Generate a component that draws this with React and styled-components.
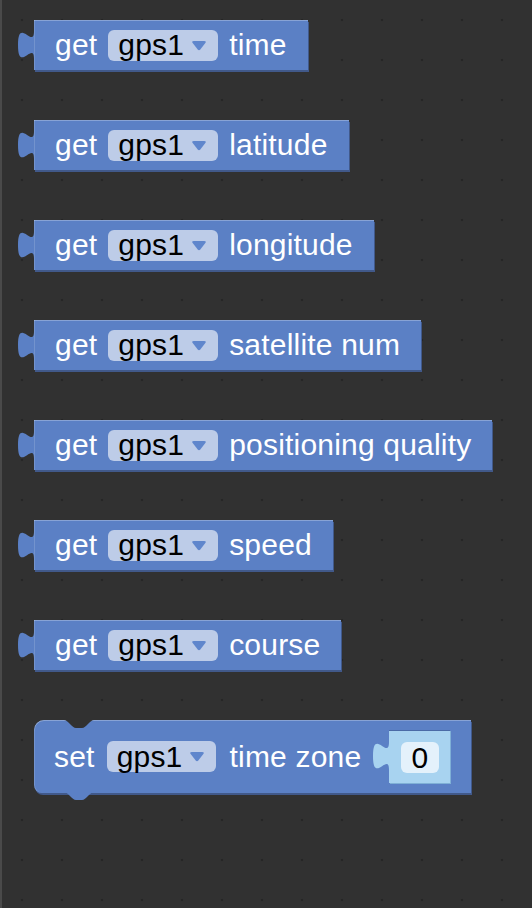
import React from 'react';
import styled, { createGlobalStyle } from 'styled-components';

const BLOCK = '#5b80c5';
const BG = '#313131';

const GlobalStyle = createGlobalStyle`
  html, body {
    margin: 0;
    padding: 0;
    background: ${BG};
  }
`;

const Workspace = styled.div`
  min-height: 908px;
  box-sizing: border-box;
  border-left: 2px solid #4a4a4a;
  background-color: ${BG};
  background-image: radial-gradient(circle, #262626 1px, transparent 1.6px);
  background-size: 40px 40px;
  padding: 20px 0 0 32px;
  display: flex;
  flex-direction: column;
  align-items: flex-start;
  gap: 50px;
  font-family: "Liberation Sans", Arial, sans-serif;
`;

const Block = styled.div`
  position: relative;
  display: flex;
  align-items: center;
  gap: ${p => (p.$tall ? 12 : 11)}px;
  height: ${p => (p.$tall ? 73 : 50)}px;
  box-sizing: border-box;
  padding: 0 21px 0 ${p => (p.$tall ? 20 : 21)}px;
  background: ${BLOCK};
  border-radius: ${p => (p.$tall ? '10px 0 0 8px' : '0')};
  box-shadow:
    inset 0 1px 0 rgba(255, 255, 255, 0.28),
    inset 1px 0 0 rgba(255, 255, 255, 0.15),
    1px 2px 0 #41598a;
`;

const Label = styled.span`
  color: #fff;
  font-size: 30px;
  line-height: 1;
  letter-spacing: 0.2px;
  white-space: nowrap;
  margin-left: ${p => p.$gapLeft || 0}px;
`;

const Dropdown = styled.div`
  display: flex;
  align-items: center;
  gap: 7px;
  height: 31px;
  padding: 0 11px 0 10px;
  box-sizing: border-box;
  border-radius: 6px;
  background: #bdcce8;
  color: #000;
  font-size: 30px;
  line-height: 1;
  letter-spacing: 0.2px;
`;

const Arrow = styled.svg`
  width: 16px;
  height: 10px;
  margin-top: 1px;
`;

const TabSvg = styled.svg`
  position: absolute;
  left: ${p => p.$left}px;
  top: ${p => p.$top}px;
  width: 16px;
  height: ${p => p.$h}px;
  overflow: visible;
`;

const EdgeSvg = styled.svg`
  position: absolute;
  left: 30px;
  ${p => (p.$bottom ? 'bottom: -8px;' : 'top: 0;')}
  width: 30px;
  height: 9px;
`;

const Socket = styled.div`
  position: relative;
  margin-left: 16px;
  width: 61px;
  height: 53px;
  box-sizing: border-box;
  display: flex;
  align-items: center;
  justify-content: center;
  background: #a8d3f0;
  border-top: 1px solid #4a6aa6;
  box-shadow: 1px 1px 0 #7fb0d6;
`;

const NumberField = styled.div`
  width: 38px;
  height: 31px;
  border-radius: 6px;
  background: #e4f1fb;
  color: #000;
  font-size: 30px;
  line-height: 31px;
  text-align: center;
`;

const Tab = ({ color, left, top, h }) => (
  <TabSvg $left={left} $top={top} $h={h} viewBox="0 0 16 30" preserveAspectRatio="none">
    <path d="M16,0 c0,20 -16,-16 -16,15 s16,-5 16,15 Z" fill={color} />
  </TabSvg>
);

const DropArrow = () => (
  <Arrow viewBox="0 0 16 10">
    <path d="M1.5 1.8 Q0.5 0 2.6 0 H13.4 Q15.5 0 14.5 1.8 L9.3 8.6 Q8 10 6.7 8.6 Z" fill="#5f86cc" />
  </Arrow>
);

const GetBlock = ({ field }) => (
  <Block>
    <Tab color={BLOCK} left={-16} top={11} h={28} />
    <Label>get</Label>
    <Dropdown>
      gps1
      <DropArrow />
    </Dropdown>
    <Label>{field}</Label>
  </Block>
);

const SetBlock = () => (
  <Block $tall>
    <EdgeSvg viewBox="0 0 30 9">
      <path d="M0,0 C4,0 8,8 12,8 L18,8 C22,8 26,0 30,0 Z" fill={BG} />
    </EdgeSvg>
    <EdgeSvg $bottom viewBox="0 0 30 9">
      <path d="M0,0 C4,0 8,8 12,8 L18,8 C22,8 26,0 30,0 Z" fill={BLOCK} />
    </EdgeSvg>
    <Label>set</Label>
    <Dropdown>
      gps1
      <DropArrow />
    </Dropdown>
    <Label $gapLeft={1}>time zone</Label>
    <Socket>
      <Tab color="#a8d3f0" left={-16} top={11} h={28} />
      <NumberField>0</NumberField>
    </Socket>
  </Block>
);

const fields = ['time', 'latitude', 'longitude', 'satellite num', 'positioning quality', 'speed', 'course'];

export default function App() {
  return (
    <>
      <GlobalStyle />
      <Workspace>
        {fields.map(f => (
          <GetBlock key={f} field={f} />
        ))}
        <SetBlock />
      </Workspace>
    </>
  );
}
